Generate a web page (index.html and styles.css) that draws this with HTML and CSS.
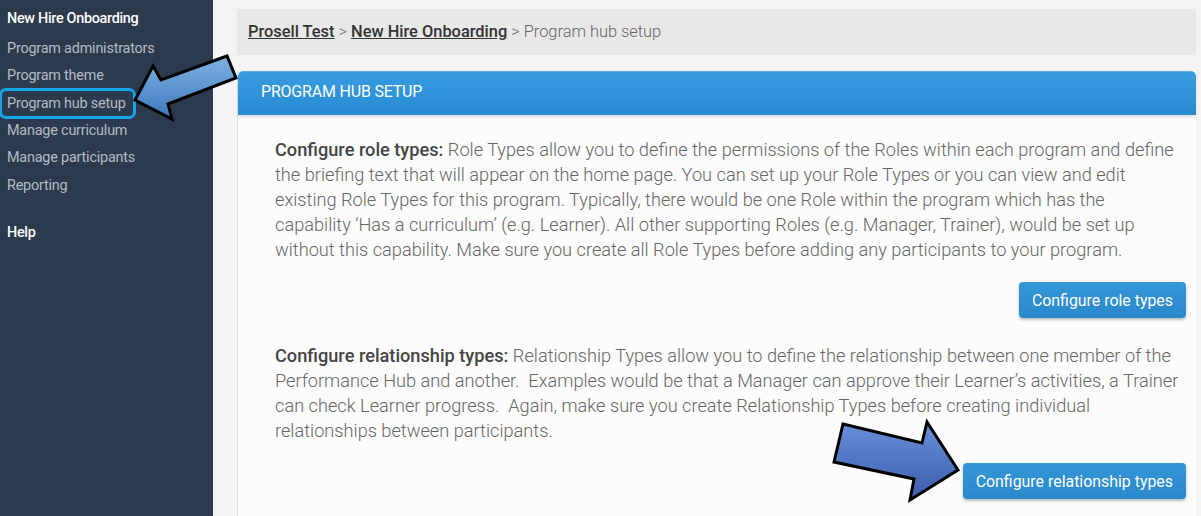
FILE: index.html
```html
<!DOCTYPE html>
<html lang="en">
<head>
  <meta charset="UTF-8">
  <meta name="viewport" content="width=device-width, initial-scale=1.0">
  <title>Program hub setup</title>
  <link rel="stylesheet" href="styles.css">
</head>
<body>
  <div class="sidebar">
    <div class="side-title">New Hire Onboarding</div>
    <a class="side-link">Program administrators</a>
    <a class="side-link">Program theme</a>
    <a class="side-link marked">Program hub setup</a>
    <a class="side-link">Manage curriculum</a>
    <a class="side-link">Manage participants</a>
    <a class="side-link">Reporting</a>
    <div class="side-title help">Help</div>
  </div>

  <div class="main">
    <div class="breadcrumb">
      <a class="crumb">Prosell Test</a> &gt; <a class="crumb">New Hire Onboarding</a> &gt; Program hub setup
    </div>

    <div class="panel">
      <div class="panel-header">PROGRAM HUB SETUP</div>
      <div class="panel-body">
        <p><strong>Configure role types:</strong> Role Types allow you to define the permissions of the Roles within each program and define the briefing text that will appear on the home page. You can set up your Role Types or you can view and edit existing Role Types for this program. Typically, there would be one Role within the program which has the capability ‘Has a curriculum’ (e.g. Learner). All other supporting Roles (e.g. Manager, Trainer), would be set up without this capability. Make sure you create all Role Types before adding any participants to your program.</p>
        <div class="button-row">
          <button class="btn">Configure role types</button>
        </div>

        <p class="second"><strong>Configure relationship types:</strong> Relationship Types allow you to define the relationship between one member of the Performance Hub and another.&nbsp; Examples would be that a Manager can approve their Learner’s activities, a Trainer can check Learner progress.&nbsp; Again, make sure you create Relationship Types before creating individual relationships between participants.</p>
        <div class="button-row">
          <button class="btn">Configure relationship types</button>
        </div>
      </div>
    </div>
  </div>

  <!-- callout arrows drawn over the screenshot -->
  <svg class="callouts" width="1201" height="516" viewBox="0 0 1201 516">
    <defs>
      <linearGradient id="arrowOne" x1="0" y1="0" x2="0" y2="1">
        <stop offset="0" stop-color="#7fb3e2"/>
        <stop offset="1" stop-color="#3a78bf"/>
      </linearGradient>
      <linearGradient id="arrowTwo" x1="0" y1="0" x2="0" y2="1">
        <stop offset="0" stop-color="#6790dc"/>
        <stop offset="1" stop-color="#3a5cab"/>
      </linearGradient>
    </defs>
    <polygon class="arrow" fill="url(#arrowOne)"
      points="135,100 153,66 161,80 227,56 236,78 168,104 172,119"/>
    <polygon class="arrow" fill="url(#arrowTwo)"
      points="843,424 922,443 927,422 958,470 910,500 914,479 834,462"/>
  </svg>
</body>
</html>
```

FILE: styles.css
```css
* {
  box-sizing: border-box;
}

body {
  margin: 0;
  height: 516px;
  overflow: hidden;
  display: flex;
  background: #f4f4f4;
  font-family: Roboto, 'Liberation Sans', sans-serif;
  position: relative;
}

.sidebar {
  width: 213px;
  flex-shrink: 0;
  background: #2c3a4d;
  padding: 5px 0 0 7px;
  display: flex;
  flex-direction: column;
  align-items: flex-start;
}

.side-title {
  color: #fff;
  font-weight: 500;
  font-size: 14.4px;
  line-height: 27px;
  margin-bottom: 3px;
  letter-spacing: -0.3px;
}

.side-title.help {
  margin-top: 20px;
}

.side-link {
  color: #b4bcc6;
  font-size: 14.4px;
  line-height: 27.4px;
  letter-spacing: -0.2px;
}

.side-link.marked {
  outline: 3px solid #19a4ea;
  outline-offset: -1px;
  border-radius: 5px;
  padding: 0 8px 0 6px;
  margin-left: -6px;
  line-height: 27px;
}

.main {
  flex: 1;
  padding: 9px 5px 0 24px;
  display: flex;
  flex-direction: column;
}

.breadcrumb {
  height: 46px;
  line-height: 46px;
  background: #e8e8e8;
  padding-left: 11px;
  font-size: 16.4px;
  color: #666;
  font-weight: 300;
}

.crumb {
  color: #333;
  font-weight: 500;
  text-decoration: underline;
}

.panel {
  margin-top: 16px;
  flex: 1;
  background: #fcfcfc;
  border-left: 1px solid #e2e2e2;
}

.panel-header {
  height: 44px;
  line-height: 40px;
  padding-left: 23px;
  background: linear-gradient(#379ce0, #288bd2);
  border-top: 1px solid #5aaee6;
  border-radius: 5px 5px 0 0;
  color: #fff;
  font-size: 16px;
  font-weight: 400;
  letter-spacing: -0.2px;
  box-shadow: 0 2px 3px rgba(0, 0, 0, 0.12);
}

.panel-body {
  padding: 22px 10px 0 37px;
}

.panel-body p {
  margin: 0 5px 0 0;
  font-size: 18.2px;
  line-height: 25px;
  font-weight: 300;
  color: #666;
}

.panel-body p strong {
  font-weight: 500;
  color: #444;
}

.panel-body p.second {
  margin-top: 25px;
}

.button-row {
  display: flex;
  justify-content: flex-end;
  margin-top: 20px;
}

.btn {
  height: 36px;
  padding: 0 13px;
  border: none;
  border-radius: 4px;
  background: linear-gradient(#3496d8, #2a88c9);
  color: #fff;
  font-family: Roboto, 'Liberation Sans', sans-serif;
  font-size: 15.9px;
  box-shadow: 0 2px 3px rgba(0, 0, 0, 0.25);
  cursor: pointer;
}

.callouts {
  position: absolute;
  left: 0;
  top: 0;
  pointer-events: none;
}

.arrow {
  stroke: #000;
  stroke-width: 3;
  stroke-linejoin: miter;
}
```
